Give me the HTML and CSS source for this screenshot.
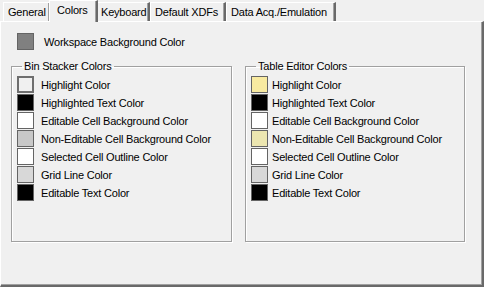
FILE: index.html
```html
<!DOCTYPE html>
<html>
<head>
<meta charset="utf-8">
<link rel="stylesheet" href="styles.css">
</head>
<body>
<div class="dialog">
  <div class="tabs">
    <div class="tab t-general">General</div>
    <div class="tab active t-colors">Colors</div>
    <div class="tab t-keyboard">Keyboard</div>
    <div class="tab t-xdf">Default XDFs</div>
    <div class="tab t-daq">Data Acq./Emulation</div>
  </div>
  <div class="panel">
    <div class="row workspace"><span class="sw c-workspace"></span><span class="lbl">Workspace Background Color</span></div>
    <div class="groups">
      <fieldset class="group left">
        <legend>Bin Stacker Colors</legend>
        <div class="row"><span class="sw c-hl-gray"></span><span class="lbl">Highlight Color</span></div>
        <div class="row"><span class="sw c-black"></span><span class="lbl">Highlighted Text Color</span></div>
        <div class="row"><span class="sw c-white"></span><span class="lbl">Editable Cell Background Color</span></div>
        <div class="row"><span class="sw c-gray"></span><span class="lbl">Non-Editable Cell Background Color</span></div>
        <div class="row"><span class="sw c-white"></span><span class="lbl">Selected Cell Outline Color</span></div>
        <div class="row"><span class="sw c-grid"></span><span class="lbl">Grid Line Color</span></div>
        <div class="row"><span class="sw c-black"></span><span class="lbl">Editable Text Color</span></div>
      </fieldset>
      <fieldset class="group right">
        <legend>Table Editor Colors</legend>
        <div class="row"><span class="sw c-yellow"></span><span class="lbl">Highlight Color</span></div>
        <div class="row"><span class="sw c-black"></span><span class="lbl">Highlighted Text Color</span></div>
        <div class="row"><span class="sw c-white"></span><span class="lbl">Editable Cell Background Color</span></div>
        <div class="row"><span class="sw c-paleyellow"></span><span class="lbl">Non-Editable Cell Background Color</span></div>
        <div class="row"><span class="sw c-white"></span><span class="lbl">Selected Cell Outline Color</span></div>
        <div class="row"><span class="sw c-grid"></span><span class="lbl">Grid Line Color</span></div>
        <div class="row"><span class="sw c-black"></span><span class="lbl">Editable Text Color</span></div>
      </fieldset>
    </div>
  </div>
</div>
</body>
</html>
```
FILE: styles.css
```css
html, body {
  margin: 0;
  padding: 0;
  background: #f0f0f0;
}
body {
  font-family: Tahoma, "Liberation Sans", Arial, sans-serif;
  font-size: 11px;
  letter-spacing: -0.2px;
  color: #000;
}
.dialog {
  width: 484px;
  height: 287px;
  display: flex;
  flex-direction: column;
}
.tabs {
  display: flex;
  align-items: flex-end;
  height: 21px;
  padding-left: 3px;
  box-sizing: border-box;
}
.tab {
  height: 19px;
  box-sizing: border-box;
  padding: 0 0 0 4px;
  line-height: 19px;
  background: #f0f0f0;
  border-top: 1px solid #fff;
  border-left: 1px solid #fff;
  border-right: 2px solid #696969;
  box-shadow: inset -1px 0 0 #a0a0a0;
  white-space: nowrap;
  flex: none;
}
.t-general { width: 48px; }
.t-colors { width: 49px; }
.t-keyboard { width: 54px; }
.t-xdf { width: 76px; }
.t-daq { width: 110px; }
.tab.active {
  height: 22px;
  margin: 0 -2px -1px -2px;
  padding-left: 7px;
  line-height: 18px;
  position: relative;
  z-index: 1;
}
.panel {
  flex: 1;
  border-top: 1px solid #fff;
  border-left: 1px solid #fff;
  border-right: 2px solid #696969;
  border-bottom: 2px solid #696969;
  box-shadow: inset -1px -1px 0 #a0a0a0;
  padding: 11px 0 0 16px;
  box-sizing: border-box;
}
.row {
  display: flex;
  align-items: center;
  height: 17px;
  margin-bottom: 1px;
}
.workspace .lbl {
  margin-left: 10px;
}
.sw {
  width: 17px;
  height: 17px;
  box-sizing: border-box;
  border: 1px solid #646464;
  flex: none;
}
.lbl {
  margin-left: 7px;
  white-space: nowrap;
}
.groups {
  display: flex;
  margin-top: 10px;
  margin-left: -6px;
}
.group {
  margin: 0;
  padding: 4px 0 0 5px;
  border: 1px solid #a0a0a0;
  box-shadow: 1px 1px 0 #fff, inset 1px 1px 0 #fff;
  height: 182px;
  box-sizing: border-box;
}
.group legend {
  padding: 0 2px;
  margin-left: 5px;
  line-height: 12px;
}
.group.left {
  width: 221px;
}
.group.right {
  width: 220px;
  margin-left: 13px;
}
.right .lbl {
  margin-left: 4px;
}
.c-workspace { background: #808080; }
.c-hl-gray { background: #f0f0f0; border: 2px solid #6e6e6e; }
.c-black { background: #000; }
.c-white { background: #fff; }
.c-gray { background: #c8c8c8; }
.c-grid { background: #d8d8d8; }
.c-yellow { background: #f8eaa0; }
.c-paleyellow { background: #ece6b0; }
```
